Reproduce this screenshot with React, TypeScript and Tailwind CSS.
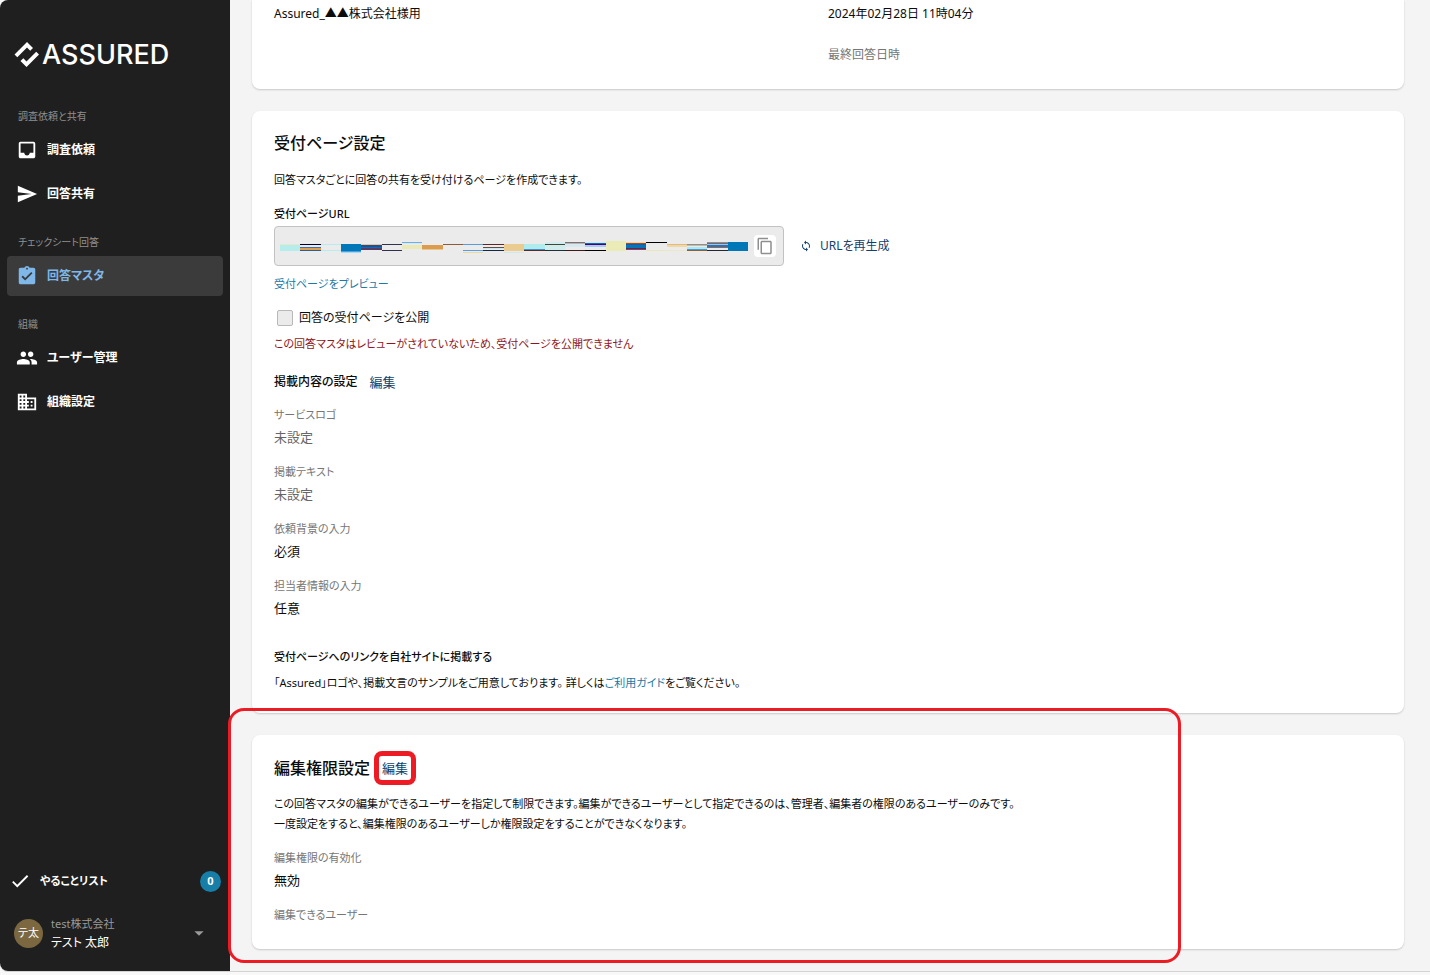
import React, { useState } from 'react';
import type { IconType } from 'react-icons';
import {
  MdArrowDropDown,
  MdAssignmentTurnedIn,
  MdBusiness,
  MdCheck,
  MdContentCopy,
  MdInbox,
  MdLoop,
  MdPeople,
  MdSend,
} from 'react-icons/md';

type NavItem = { label: string; icon: IconType; active?: boolean };
type NavGroup = { title: string; items: NavItem[] };

const navGroups: NavGroup[] = [
  {
    title: '調査依頼と共有',
    items: [
      { label: '調査依頼', icon: MdInbox },
      { label: '回答共有', icon: MdSend },
    ],
  },
  {
    title: 'チェックシート回答',
    items: [{ label: '回答マスタ', icon: MdAssignmentTurnedIn, active: true }],
  },
  {
    title: '組織',
    items: [
      { label: 'ユーザー管理', icon: MdPeople },
      { label: '組織設定', icon: MdBusiness },
    ],
  },
];

const publishFields = [
  { label: 'サービスロゴ', value: '未設定', empty: true },
  { label: '掲載テキスト', value: '未設定', empty: true },
  { label: '依頼背景の入力', value: '必須' },
  { label: '担当者情報の入力', value: '任意' },
];

// 伏せ字モザイク: 列ごとに [y, 高さ, 色]
const mosaic: [number, number, string][][] = [
  [[4, 1, '#e6e9c8'], [5, 6, '#b5ecec']],
  [[4, 1, '#000030'], [7, 1, '#4070b0'], [8, 2, '#dca050'], [10, 1, '#2f5f90']],
  [[4, 1, '#b5ecec'], [10, 1, '#b5ecec']],
  [[4, 7, '#0078b8'], [11, 1, '#4aa0e0'], [12, 1, '#a8d8f0']],
  [[4, 1, '#e8c888'], [5, 2, '#2a4a98'], [7, 1, '#0070b8'], [8, 1, '#2a4a98'], [9, 1, '#803030']],
  [[4, 1, '#303050'], [10, 1, '#303050']],
  [[2, 1, '#6fb0e0'], [3, 1, '#d4e8f0'], [5, 4, '#e9eab8']],
  [[5, 4, '#dc9c50'], [9, 1, '#e8c890']],
  [[4, 1, '#905a38']],
  [[4, 1, '#5a9cd8'], [10, 1, '#5a9cd8'], [12, 1, '#ecd9a0']],
  [[4, 1, '#5a2828'], [7, 1, '#605040'], [8, 1, '#c8e8f8'], [10, 1, '#182840']],
  [[4, 7, '#ebcc90'], [12, 1, '#d0e8e8']],
  [[4, 5, '#b0ecec'], [9, 1, '#4a90c8'], [10, 1, '#582828']],
  [[2, 8, '#d0ecec'], [4, 1, '#404838'], [10, 1, '#203038']],
  [[2, 1, '#a06840'], [3, 1, '#90c0e8'], [4, 3, '#d8e8f0'], [10, 1, '#401818']],
  [[2, 1, '#d0e8e8'], [3, 1, '#2060b0'], [4, 1, '#480080'], [5, 2, '#a0d0f0'], [10, 1, '#000000']],
  [[1, 10, '#ebebb8']],
  [[2, 1, '#ecd9a0'], [3, 1, '#a05030'], [4, 1, '#3050a0'], [5, 3, '#0078b8'], [8, 1, '#403080'], [9, 1, '#a04038']],
  [[2, 1, '#000000'], [10, 1, '#e8e8b8']],
  [[4, 1, '#e8b878'], [5, 2, '#ecd9a8'], [10, 1, '#e9e9c8']],
  [[4, 1, '#c08050'], [5, 1, '#90c8e8'], [7, 2, '#b0e8ec'], [9, 1, '#4898d8'], [10, 1, '#906030']],
  [[2, 1, '#c08050'], [3, 1, '#3878b8'], [4, 1, '#90c8f0'], [5, 2, '#3070b0'], [7, 1, '#906858'], [10, 1, '#202838']],
  [[2, 9, '#0078b8']],
];

const MosaicText = () => (
  <svg
    width="468"
    height="14"
    viewBox="0 -1 468 14"
    shapeRendering="crispEdges"
    aria-hidden="true"
  >
    {mosaic.map((bands, i) => {
      const x = Math.round((i * 468) / mosaic.length);
      const next = Math.round(((i + 1) * 468) / mosaic.length);
      return bands.map(([y, h, color]) => (
        <rect key={`${i}-${y}`} x={x} y={y} width={next - x} height={h} fill={color} />
      ));
    })}
  </svg>
);

const Logo = () => (
  <a href="#" className="flex items-center gap-0.5 px-3.5 text-white">
    <svg width="26" height="26" viewBox="0 0 26 26" fill="currentColor" aria-hidden="true">
      <path d="M.5 12.5 13 0l6 6-2.8 2.8L13 5.6 3.3 15.3z" />
      <path d="M25 12.5 12.5 25l-6-6 2.8-2.8 3.2 3.2 9.7-9.7z" />
    </svg>
    <span className="font-[Inter,sans-serif] text-[27px] leading-7 font-medium">ASSURED</span>
  </a>
);

const Sidebar = () => (
  <aside className="flex w-[230px] shrink-0 flex-col rounded-l-lg bg-[#1f1f1f] pt-[41px] pb-[19px] text-white">
    <Logo />
    <nav className="mt-[27px] flex flex-col gap-2 px-[7px]">
      {navGroups.map((group) => (
        <div key={group.title}>
          <p className="px-[11px] pt-2.5 pb-1 text-[10px] leading-5 text-[#8f8f8f]">
            {group.title}
          </p>
          <ul className="flex flex-col gap-1">
            {group.items.map(({ label, icon: Icon, active }) => (
              <li key={label}>
                <a
                  href="#"
                  aria-current={active ? 'page' : undefined}
                  className={`flex h-10 items-center gap-[9px] rounded px-[9px] font-bold ${
                    active ? 'bg-[#3b3b3b] text-[#7fb8e8]' : ''
                  }`}
                >
                  <Icon size={22} />
                  {label}
                </a>
              </li>
            ))}
          </ul>
        </div>
      ))}
    </nav>
    <a href="#" className="mt-auto flex items-center gap-[9px] px-[9px] text-[11px] font-bold">
      <MdCheck size={22} />
      <span className="flex-1">やることリスト</span>
      <span className="flex size-[21px] items-center justify-center rounded-full bg-[#177ea8]">
        0
      </span>
    </a>
    <button type="button" className="mt-[22px] flex items-center gap-2 pr-5 pl-3.5 text-left">
      <span className="flex size-[29px] items-center justify-center rounded-full bg-[#7c6840] text-[11px]">
        テ太
      </span>
      <span className="flex-1">
        <span className="block text-[11px] leading-[19px] text-[#9a9a9a]">test株式会社</span>
        <span className="block leading-[19px]">テスト 太郎</span>
      </span>
      <MdArrowDropDown size={22} className="text-[#9a9a9a]" />
    </button>
  </aside>
);

type FieldProps = { label: string; value?: string; empty?: boolean };

const Field = ({ label, value, empty }: FieldProps) => (
  <div>
    <dt className="text-[11px] leading-5 text-[#767676]">{label}</dt>
    {value && (
      <dd className={`mt-0.5 text-[13px] leading-5 ${empty ? 'text-[#666]' : ''}`}>{value}</dd>
    )}
  </div>
);

const ReceptionCard = () => {
  const [isPublic, setIsPublic] = useState(false);

  return (
    <section className="rounded-lg bg-white p-[22px] pb-5 shadow-[0_1px_2px_rgba(0,0,0,0.18)]">
      <h2 className="text-base leading-5 font-medium">受付ページ設定</h2>
      <p className="mt-[17px] text-[11px] leading-5">
        回答マスタごとに回答の共有を受け付けるページを作成できます。
      </p>
      <h3 className="mt-3.5 text-[11px] leading-5 font-medium">受付ページURL</h3>
      <div className="mt-0.5 flex items-center gap-4">
        <div className="flex h-10 w-[510px] items-center justify-between rounded border border-[#c2c2c2] bg-[#ebebeb] pr-[7px] pl-[5px]">
          <MosaicText />
          <button
            type="button"
            aria-label="URLをコピー"
            className="flex size-[22px] items-center justify-center rounded bg-white text-[#8f8f8f]"
          >
            <MdContentCopy size={18} />
          </button>
        </div>
        <button type="button" className="flex items-center gap-2 text-[#123f6d]">
          <MdLoop size={12} />
          URLを再生成
        </button>
      </div>
      <a href="#" className="mt-2 block w-fit text-[11px] leading-5 text-[#1a7aa5]">
        受付ページをプレビュー
      </a>
      <label className="mt-3.5 flex w-fit items-center gap-1.5 pl-[3px]">
        <input
          type="checkbox"
          checked={isPublic}
          onChange={(e) => setIsPublic(e.target.checked)}
          className="size-4 appearance-none rounded-xs border border-[#b8b8b8] bg-[#ebebeb] checked:bg-[#177ea8]"
        />
        回答の受付ページを公開
      </label>
      <p className="mt-1.5 text-[11px] leading-5 text-[#8f1522]">
        この回答マスタはレビューがされていないため、受付ページを公開できません
      </p>
      <div className="mt-[18px] flex gap-3">
        <h3 className="font-medium">掲載内容の設定</h3>
        <a href="#" className="text-[13px] leading-5 text-[#123f6d]">
          編集
        </a>
      </div>
      <dl className="mt-[13px] flex flex-col gap-[15px]">
        {publishFields.map((field) => (
          <Field key={field.label} {...field} />
        ))}
      </dl>
      <h3 className="mt-[29px] text-[11px] leading-5 font-medium">
        受付ページへのリンクを自社サイトに掲載する
      </h3>
      <p className="mt-1.5 text-[11px] leading-5">
        「Assured」ロゴや、掲載文言のサンプルをご用意しております。 詳しくは
        <a href="#" className="text-[#1a7aa5]">
          ご利用ガイド
        </a>
        をご覧ください。
      </p>
    </section>
  );
};

const PermissionCard = () => (
  <section className="relative rounded-lg bg-white p-[22px] pt-[23px] pb-6 shadow-[0_1px_2px_rgba(0,0,0,0.18)]">
    {/* 手順説明用の赤枠 */}
    <div className="pointer-events-none absolute -top-[27px] right-[223px] -bottom-[14px] -left-6 z-10 rounded-2xl border-[3px] border-[#ed1c24]" />
    <div className="flex gap-3">
      <h2 className="text-base leading-5 font-medium">編集権限設定</h2>
      <a href="#" className="relative text-[13px] leading-5 text-[#123f6d]">
        編集
        <span className="pointer-events-none absolute -inset-x-2 -inset-y-[7px] rounded-lg border-[5px] border-[#ed1c24]" />
      </a>
    </div>
    <p className="mt-4 text-[11px] leading-5">
      この回答マスタの編集ができるユーザーを指定して制限できます。編集ができるユーザーとして指定できるのは、管理者、編集者の権限のあるユーザーのみです。
      <br />
      一度設定をすると、編集権限のあるユーザーしか権限設定をすることができなくなります。
    </p>
    <dl className="mt-3.5 flex flex-col gap-[15px]">
      <Field label="編集権限の有効化" value="無効" />
      <Field label="編集できるユーザー" />
    </dl>
  </section>
);

const App = () => (
  <div className="flex min-h-screen flex-col bg-[#f8f8f8] pb-[3px] font-['Noto_Sans','Noto_Sans_CJK_JP',sans-serif] text-xs leading-5 text-[#0c0c0c] [font-feature-settings:'palt']">
    <div className="flex flex-1 rounded-l-lg border-b border-[#d4d4d4] bg-[#f4f4f4]">
      <Sidebar />
      <main className="flex min-w-0 flex-1 flex-col gap-[22px] pr-[26px] pb-[21px] pl-[22px]">
        <section className="grid grid-cols-2 rounded-b-lg bg-white px-[22px] pt-1 pb-6 shadow-[0_1px_2px_rgba(0,0,0,0.18)]">
          <p>Assured_▲▲株式会社様用</p>
          <dl className="flex flex-col gap-[21px]">
            <dd>2024年02月28日 11時04分</dd>
            <dt className="text-[#767676]">最終回答日時</dt>
          </dl>
        </section>
        <ReceptionCard />
        <PermissionCard />
      </main>
    </div>
  </div>
);

export default App;
